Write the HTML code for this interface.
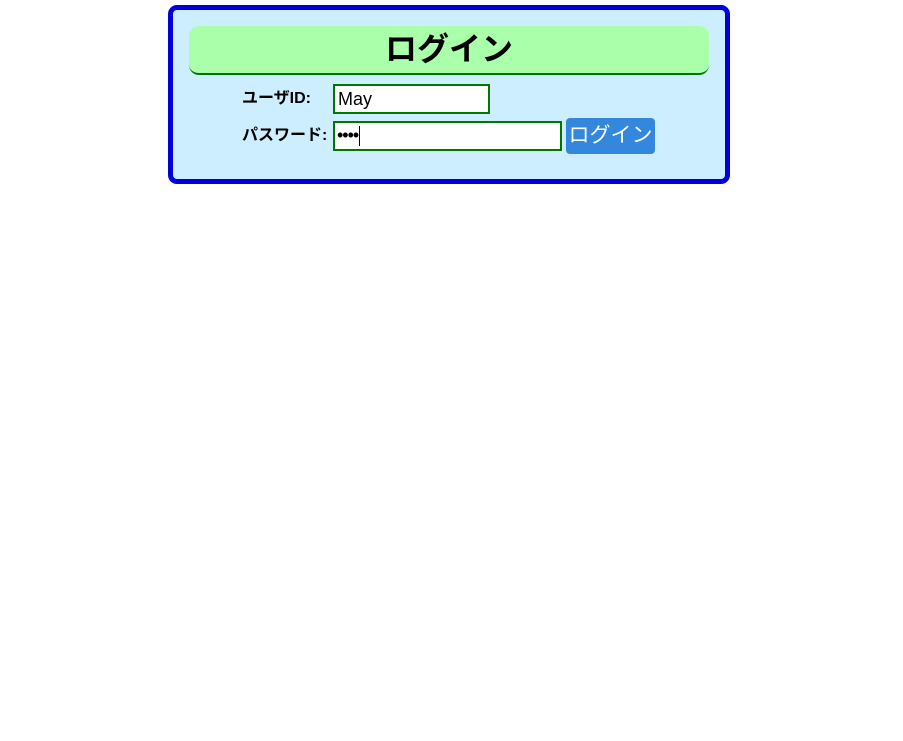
<!DOCTYPE html>
<html><head><meta charset="utf-8"><style>
body{margin:0;background:#fff;font-family:"Liberation Sans","Noto Sans CJK JP",sans-serif;}
.box{position:absolute;left:168px;top:5px;width:552px;height:169px;border:5px solid #0000dd;border-radius:9px;background:#cceeff;}
.hd{position:absolute;left:189px;top:26px;width:520px;height:47px;background:#aaffaa;border-bottom:2px solid #007700;border-radius:10px;text-align:center;font-weight:bold;font-size:32px;line-height:46px;}
.lb{position:absolute;font-weight:bold;font-size:16px;line-height:20px;}
.in{position:absolute;box-sizing:border-box;border:2px solid #007700;background:#fff;font-size:18px;line-height:26px;padding-left:3px;}
.bt{position:absolute;left:566px;top:118px;width:89px;height:36px;background:#3388dd;color:#fff;border-radius:4px;font-size:21px;line-height:36px;text-align:center;}
</style></head><body>
<div class="box"></div>
<div class="hd">ログイン</div>
<div class="lb" style="left:242px;top:89px">ユーザID:</div>
<div class="in" style="left:333px;top:84px;width:157px;height:30px">May</div>
<div class="lb" style="left:242px;top:126px">パスワード:</div>
<div class="in" style="left:333px;top:121px;width:229px;height:30px;font-size:18px;line-height:25px;padding-left:2px"><span style="letter-spacing:-1px">••••</span><span style="display:inline-block;width:1px;height:20px;background:#000;vertical-align:middle;margin-left:1px"></span></div>
<div class="bt">ログイン</div>
</body></html>
